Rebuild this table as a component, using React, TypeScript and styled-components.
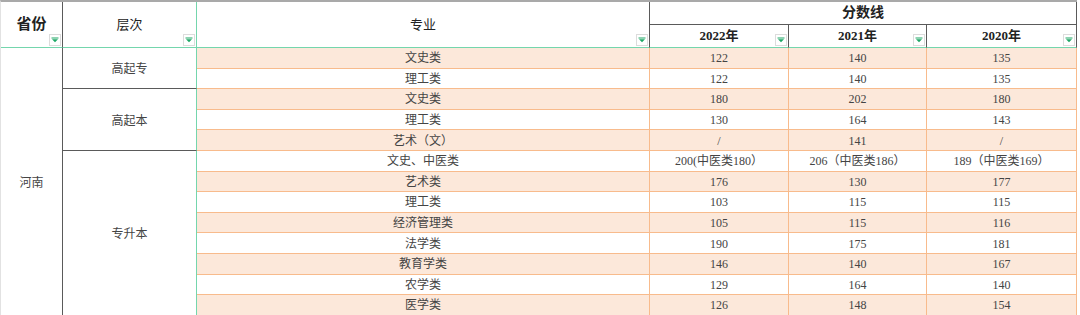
import React from "react";
import styled, { createGlobalStyle } from "styled-components";

const Global = createGlobalStyle`
  html, body { margin: 0; padding: 0; background: #ffffff; }
  body { font-family: "Liberation Serif", "Noto Sans CJK SC", serif; }
`;

const DARK = "#5a5a5a";
const GREEN = "#74d6ad";
const ORANGE = "#f8bb8c";
const FILL = "#fce8da";

type Place = { $col: number; $row: number; $colSpan?: number; $rowSpan?: number };

const place = (p: Place) => `
  grid-column: ${p.$col} / span ${p.$colSpan || 1};
  grid-row: ${p.$row} / span ${p.$rowSpan || 1};
`;

const Grid = styled.div`
  display: grid;
  width: 1077px;
  grid-template-columns: 62px 134px 453px 139px 138px 150px;
  grid-template-rows: 23px 23px repeat(13, 20.6px);
  border-top: 2px solid #a9a9a9;
  border-left: 1px solid #e2e2e2;
  box-sizing: border-box;
`;

const HeadCell = styled.div<Place & { $right?: string; $bottom?: string; $bold?: boolean; $size?: number }>`
  ${(p) => place(p)}
  position: relative;
  display: flex;
  align-items: center;
  justify-content: center;
  box-sizing: border-box;
  border-right: 1px solid ${(p) => p.$right || DARK};
  border-bottom: 1px solid ${(p) => p.$bottom || GREEN};
  font-size: ${(p) => p.$size || 13}px;
  font-weight: ${(p) => (p.$bold ? 700 : 400)};
  color: #222;
  background: #fff;
  line-height: 1;
  padding-bottom: 1px;
`;

const GroupCell = styled.div<Place & { $right: string; $bottom?: string }>`
  ${(p) => place(p)}
  display: flex;
  align-items: center;
  justify-content: center;
  box-sizing: border-box;
  border-right: 1px solid ${(p) => p.$right};
  border-bottom: ${(p) => (p.$bottom ? `1px solid ${p.$bottom}` : "none")};
  font-size: 12px;
  color: #444;
  background: #fff;
`;

const DataCell = styled.div<Place & { $alt: boolean }>`
  ${(p) => place(p)}
  display: flex;
  align-items: center;
  justify-content: center;
  box-sizing: border-box;
  border-right: 1px solid ${ORANGE};
  border-bottom: 1px solid ${ORANGE};
  background: ${(p) => (p.$alt ? FILL : "#ffffff")};
  font-size: 12px;
  color: #444;
  white-space: nowrap;
  line-height: 1;
  padding-top: 1px;
`;

const FilterBtn = styled.span`
  position: absolute;
  right: 1px;
  bottom: 1px;
  width: 12px;
  height: 12px;
  box-sizing: border-box;
  border: 1px solid #dcdcdc;
  background: #fff;
  display: flex;
  align-items: center;
  justify-content: center;
`;

const Filter = () => (
  <FilterBtn>
    <svg width="8" height="6" viewBox="0 0 8 6">
      <rect x="0.5" y="0.5" width="7" height="1" fill="#1ea866" />
      <polygon points="1,2.2 7,2.2 4,5.2" fill="#1ea866" />
    </svg>
  </FilterBtn>
);

const rows: [string, string, string, string][] = [
  ["文史类", "122", "140", "135"],
  ["理工类", "122", "140", "135"],
  ["文史类", "180", "202", "180"],
  ["理工类", "130", "164", "143"],
  ["艺术（文）", "/", "141", "/"],
  ["文史、中医类", "200(中医类180）", "206（中医类186）", "189（中医类169）"],
  ["艺术类", "176", "130", "177"],
  ["理工类", "103", "115", "115"],
  ["经济管理类", "105", "115", "116"],
  ["法学类", "190", "175", "181"],
  ["教育学类", "146", "140", "167"],
  ["农学类", "129", "164", "140"],
  ["医学类", "126", "148", "154"],
];

const groups = [
  { name: "高起专", start: 0, span: 2, bottom: DARK },
  { name: "高起本", start: 2, span: 3, bottom: DARK },
  { name: "专升本", start: 5, span: 8, bottom: undefined },
];

const years = ["2022年", "2021年", "2020年"];

export default function App() {
  return (
    <>
      <Global />
      <Grid>
        <HeadCell $col={1} $row={1} $rowSpan={2} $bold $size={15}>
          省份
          <Filter />
        </HeadCell>
        <HeadCell $col={2} $row={1} $rowSpan={2} $right={GREEN}>
          层次
          <Filter />
        </HeadCell>
        <HeadCell $col={3} $row={1} $rowSpan={2}>
          专业
          <Filter />
        </HeadCell>
        <HeadCell $col={4} $row={1} $colSpan={3} $bold $size={14} $bottom={DARK}>
          分数线
        </HeadCell>
        {years.map((y, i) => (
          <HeadCell key={y} $col={4 + i} $row={2} $bold>
            {y}
            <Filter />
          </HeadCell>
        ))}
        <GroupCell $col={1} $row={3} $rowSpan={13} $right={DARK}>
          河南
        </GroupCell>
        {groups.map((g) => (
          <GroupCell key={g.name} $col={2} $row={3 + g.start} $rowSpan={g.span} $right={GREEN} $bottom={g.bottom}>
            {g.name}
          </GroupCell>
        ))}
        {rows.map((r, i) =>
          r.map((v, j) => (
            <DataCell key={`${i}-${j}`} $col={3 + j} $row={3 + i} $alt={i % 2 === 0}>
              {v}
            </DataCell>
          ))
        )}
      </Grid>
    </>
  );
}
